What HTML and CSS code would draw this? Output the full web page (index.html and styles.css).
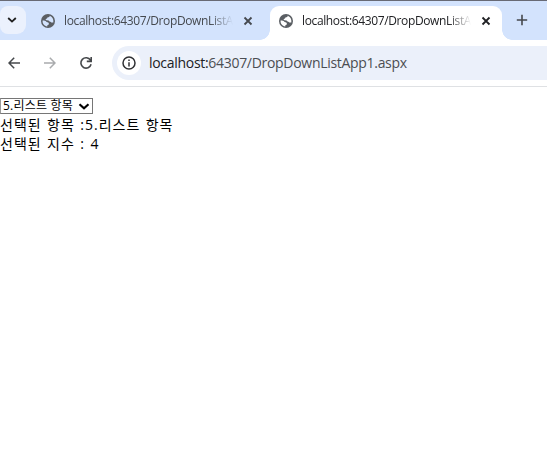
FILE: index.html
```html
<!DOCTYPE html>
<html lang="ko">
<head>
<meta charset="utf-8">
<title>localhost:64307/DropDownListApp1.aspx</title>
<link rel="stylesheet" href="styles.css">
</head>
<body>
<svg class="defs" width="0" height="0">
  <symbol id="globe" viewBox="0 0 14 14">
    <circle cx="7" cy="7" r="7" fill="#5a5e63"/>
    <path class="land" d="M8.6 1.7C8.7 3.2 7.8 3.3 6.4 3.4C6.4 4.7 4.6 4.4 4.6 5.5C4.6 6.7 7.8 6 8.1 7.1C8.3 8.2 10.2 7.5 10.2 8.5H12.3C12.9 5.2 11.3 2.6 8.6 1.7zM1.6 6.6C1.3 9.7 3.4 12.2 6.3 12.5V11.2C7.7 11.1 8 10.4 7.8 9.3C7.5 8 5.5 8.7 5.1 7.6C4.8 6.8 3.4 6.6 1.6 6.6z"/>
  </symbol>
  <symbol id="close" viewBox="0 0 10 10">
    <path d="M1.5 1.5L8.5 8.5M8.5 1.5L1.5 8.5" fill="none" stroke="currentColor" stroke-width="1.8"/>
  </symbol>
</svg>
<header class="tabstrip">
  <button class="search"><svg width="10" height="6" viewBox="0 0 10 6"><path d="M1.2 1L5 4.6L8.8 1" fill="none" stroke="#1f1f1f" stroke-width="1.8"/></svg></button>
  <div class="tab">
    <svg class="globe" width="14" height="14"><use href="#globe"/></svg>
    <span class="title">localhost:64307/DropDownListA</span>
    <svg class="close" width="10" height="10"><use href="#close"/></svg>
  </div>
  <div class="tab active">
    <svg class="globe" width="14" height="14"><use href="#globe"/></svg>
    <span class="title">localhost:64307/DropDownListA</span>
    <svg class="close" width="10" height="10"><use href="#close"/></svg>
  </div>
  <svg class="plus" width="12" height="12" viewBox="0 0 12 12"><path d="M6 .8V11.2M.8 6H11.2" stroke="#45484d" stroke-width="1.6"/></svg>
</header>
<nav class="toolbar">
  <svg class="nav" width="12" height="12" viewBox="0 0 12 12"><path d="M6.2 .8L1 6L6.2 11.2M1 6H12" fill="none" stroke="#45484b" stroke-width="1.5"/></svg>
  <svg class="nav forward" width="12" height="12" viewBox="0 0 12 12"><path d="M5.8 .8L11 6L5.8 11.2M11 6H0" fill="none" stroke="#a9abad" stroke-width="1.5"/></svg>
  <svg class="nav reload" width="14" height="14" viewBox="0 0 14 14"><path d="M11.5 4.2A5.2 5.2 0 1 0 12.1 8.3M12.2 1V5.4H7.8" fill="none" stroke="#45484b" stroke-width="1.6"/></svg>
  <div class="address">
    <span class="info"><svg width="14" height="14" viewBox="0 0 14 14"><circle cx="7" cy="7" r="6" fill="none" stroke="#303134" stroke-width="1.5"/><path d="M7 6.2V10.4M7 3.6V5.1" stroke="#303134" stroke-width="1.5"/></svg></span>
    <span class="url"><span class="host">localhost:</span>64307/DropDownListApp1.aspx</span>
  </div>
</nav>
<main>
  <div class="select"><span>5.리스트 항목</span><svg width="12" height="7" viewBox="0 0 12 7"><path d="M1.5 1.2L6 5.2L10.5 1.2" fill="none" stroke="#000" stroke-width="2.2"/></svg></div>
  <div class="line"><span class="picked">선택된 항목 :5.리스트 항목</span></div>
  <div class="line"><span class="index">선택된 지수 : 4</span></div>
</main>
</body>
</html>
```
FILE: styles.css
```css
* { box-sizing: border-box; }
body { margin: 0; width: 547px; height: 458px; overflow: hidden; background: #fff; font-family: "Open Sans", "Noto Sans CJK KR", sans-serif; }
svg { display: block; flex: none; }
.defs { position: absolute; }
.tabstrip { display: flex; height: 40px; padding-top: 5px; border-top: 1px solid #686a75; background: #d3e3fd; }
.search { width: 26px; height: 28px; padding: 0 0 0 7px; border: 0; border-radius: 8px 9px 9px 8px; background: #ebf1fd; }
.tab { display: flex; align-items: center; width: 232px; height: 34px; margin-left: 6px; padding: 0 11px 5px 9px; color: #45494f; --land: #d3e3fd; }
.tab.active { position: relative; border-radius: 9px 9px 0 0; background: #fff; color: #202124; --land: #fff; }
.tab.active::before, .tab.active::after { content: ""; position: absolute; bottom: 0; width: 10px; height: 10px; }
.tab.active::before { left: -10px; background: radial-gradient(circle at 0 0, transparent 9.5px, #fff 10px); }
.tab.active::after { right: -10px; background: radial-gradient(circle at 100% 0, transparent 9.5px, #fff 10px); }
.land { fill: var(--land); }
.title { width: 174px; margin: 1px 0 0 9px; white-space: nowrap; font-size: 12px; line-height: 20px; letter-spacing: -.37px; mask-image: linear-gradient(90deg, #000 146px, transparent 169px); }
.close { margin-left: 6px; }
.plus { margin: 8px 0 0 14px; }
.toolbar { display: flex; align-items: center; height: 47px; padding-left: 8px; border-bottom: 1px solid #dfe1e4; }
.forward { margin-left: 24px; }
.reload { margin-left: 23px; }
.address { display: flex; align-items: center; flex: 1; height: 34px; margin-left: 19px; padding-left: 5px; border-radius: 17px 0 0 17px; background: #ebf0fa; }
.info { display: flex; align-items: center; justify-content: center; width: 24px; height: 24px; border-radius: 50%; background: #fff; }
.url { margin-left: 8px; color: #4b4e52; font-size: 14px; line-height: 20px; letter-spacing: -.3px; white-space: nowrap; }
.host { color: #202124; }
main { padding-top: 11px; color: #000; }
.select { display: flex; align-items: center; justify-content: space-between; width: 93px; height: 16px; padding: 0 2px; border: 1px solid #767676; border-left-color: #999; font-size: 12px; line-height: 12px; letter-spacing: .2px; white-space: nowrap; }
.line { height: 19px; font-size: 14px; line-height: 20px; letter-spacing: 1px; word-spacing: .8px; white-space: nowrap; }
.line:nth-child(2) { margin-top: 1px; }
```
